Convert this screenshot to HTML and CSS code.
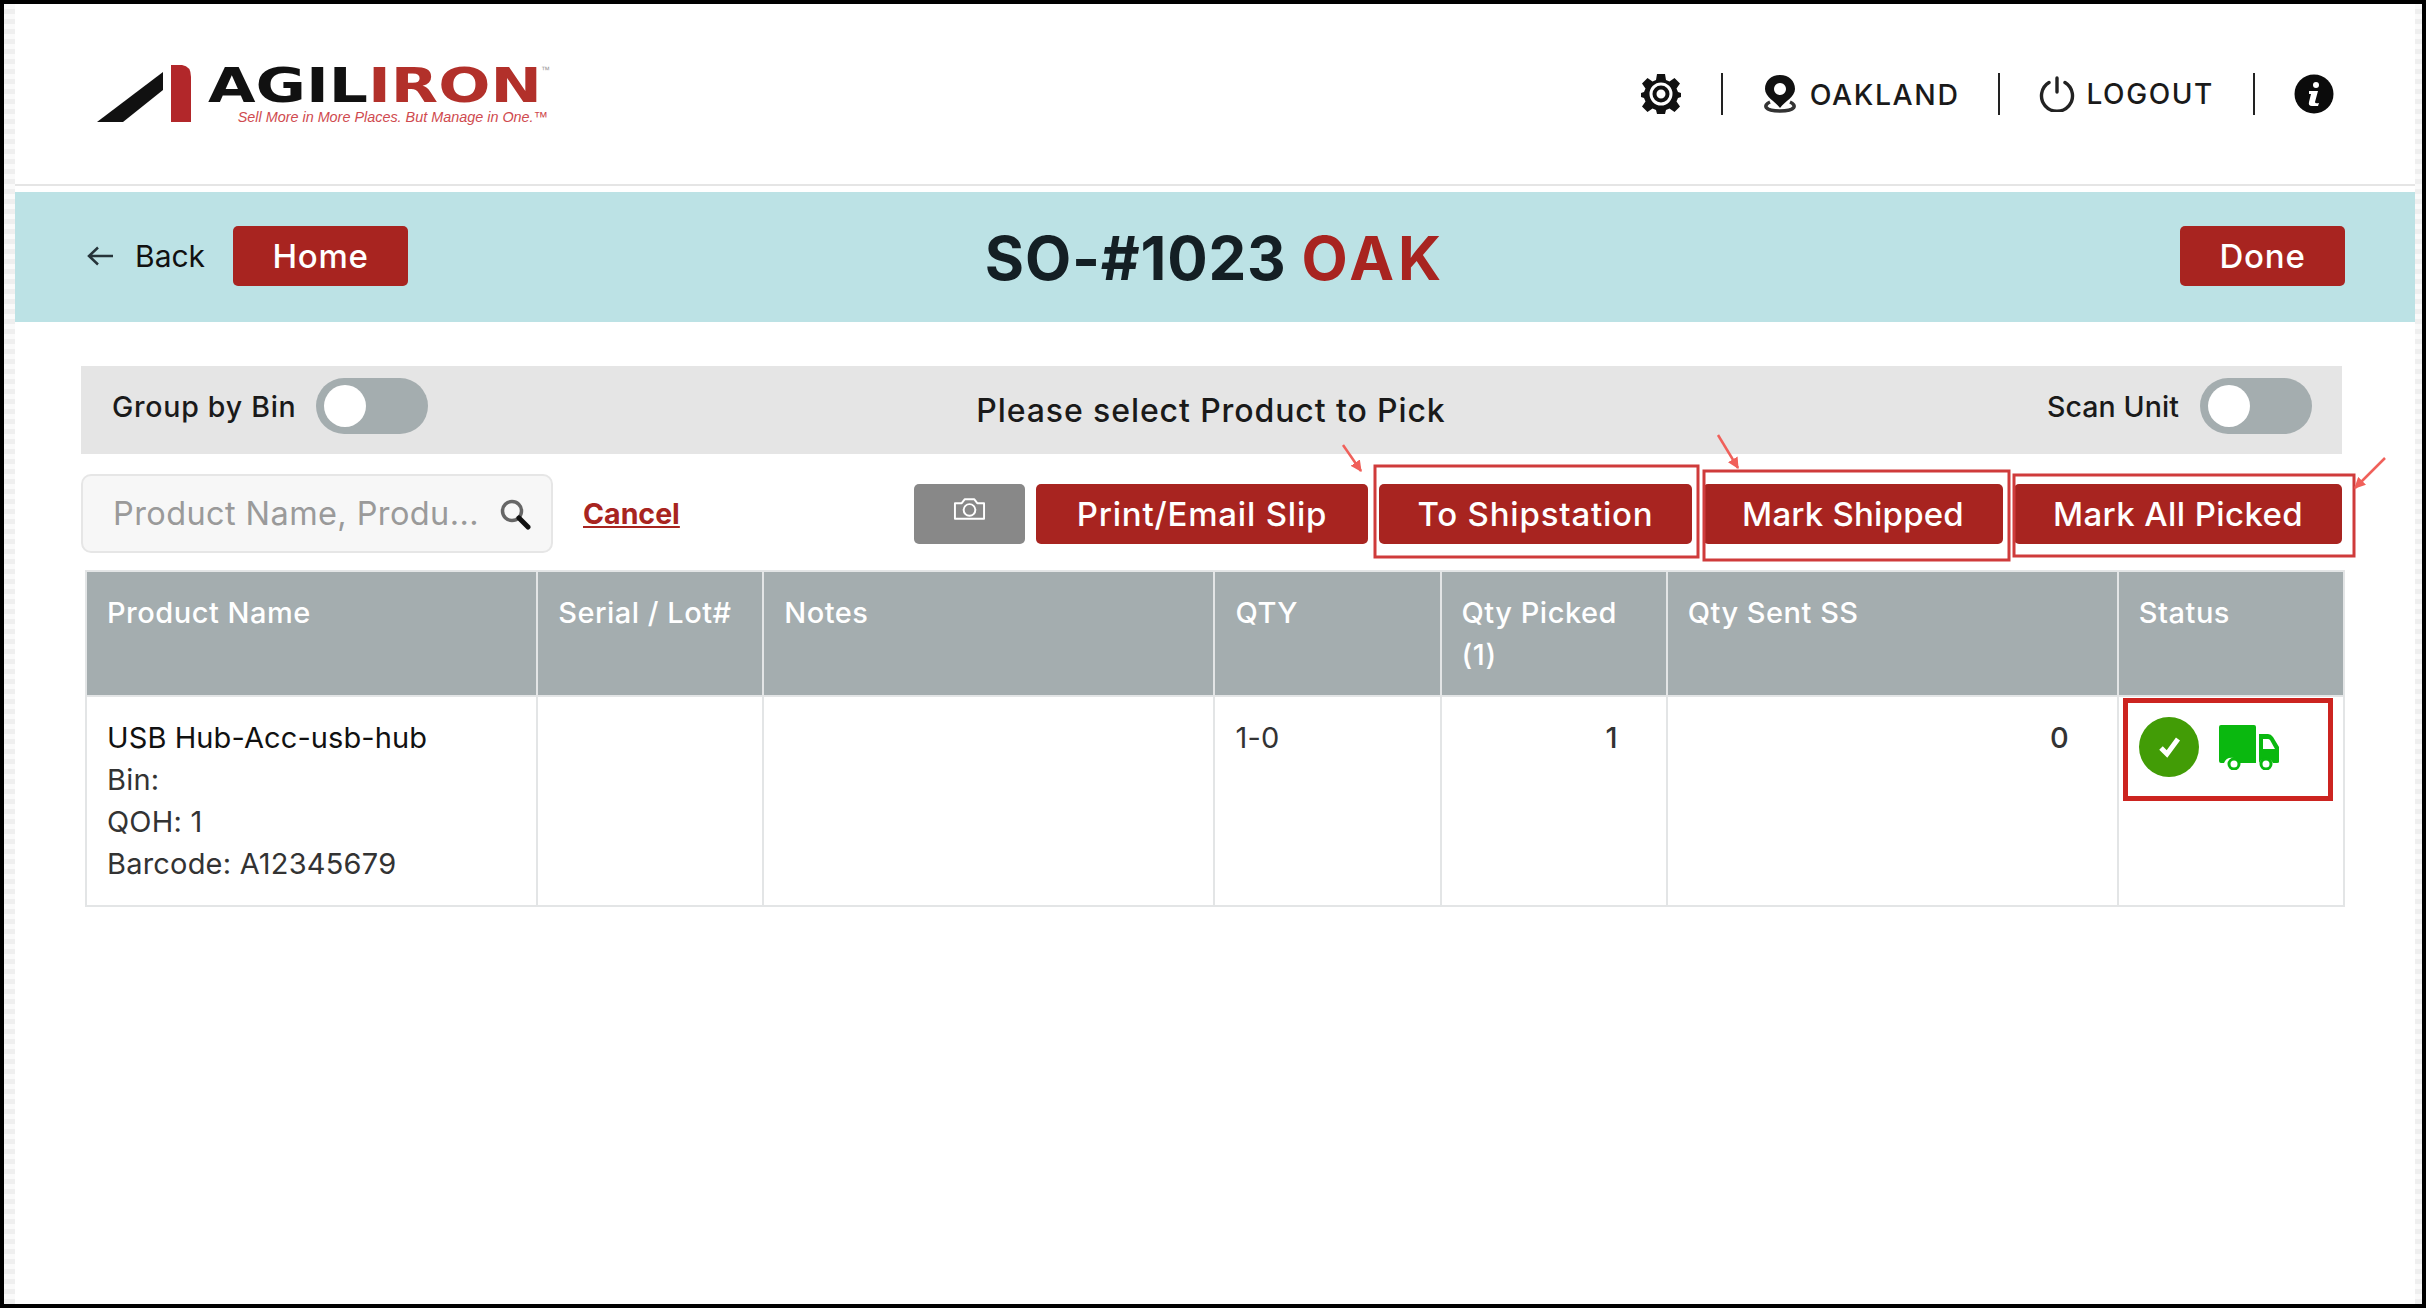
FILE: index.html
```html
<!DOCTYPE html>
<html lang="en">
<head>
<meta charset="utf-8">
<title>SO-#1023 OAK</title>
<link rel="stylesheet" href="styles.css">
</head>
<body>
<div class="frame">
  <header class="topbar">
    <div class="logo">
      <svg class="logo-mark" viewBox="0 0 94 57" aria-hidden="true">
        <path d="M0 57 L66 7 L66 25 L26 57 Z" fill="#111"/>
        <path d="M74 0 H85 Q94 1 94 12 V57 H74 Z" fill="#b2272a"/>
      </svg>
      <div class="logo-words">
        <div class="logo-name"><span class="agil">AGIL</span><span class="iron">IRON</span></div>
        <div class="logo-tag">Sell More in More Places. But Manage in One.™</div>
        <span class="tm">™</span>
      </div>
    </div>
    <nav class="topnav">
      <svg class="ico-gear" viewBox="0 0 40 40" aria-hidden="true">
        <path fill-rule="evenodd" fill="#111" d="M16 0h8l1 6 3.500 1.500 5-3.500 5.500 5.500-3.500 5L37 18l3 1v4l-3 1-1.500 3.500 3.500 5-5.500 5.500-5-3.500L25 36l-1 4h-8l-1-4-3.500-1.500-5 3.500L1 32.500l3.500-5L3 24l-3-1v-4l3-1 1.500-3.500-3.500-5L6.500 4l5 3.500L15 6zM20 8.500a11.500 11.500 0 1 0 0 23a11.500 11.500 0 1 0 0-23z"/>
        <circle cx="20" cy="20" r="6.500" fill="none" stroke="#111" stroke-width="4"/>
      </svg>
      <span class="sep sep-a"></span>
      <svg class="ico-pin" viewBox="0 0 34 38" aria-hidden="true">
        <path fill="none" stroke="#333" stroke-width="3.500" d="M7 27 C0 30 1 36 17 36 C33 36 34 30 27 27"/>
        <path fill-rule="evenodd" fill="#111" d="M17 0 C8 0 2 6 2 14 C2 22 12 26 17 33 C22 26 32 22 32 14 C32 6 26 0 17 0Z M17 8 a6 6 0 1 0 0.010 0Z"/>
      </svg>
      <span class="nav-text nav-oak">OAKLAND</span>
      <span class="sep sep-b"></span>
      <svg class="ico-power" viewBox="0 0 36 36" aria-hidden="true">
        <path fill="none" stroke="#222" stroke-width="3.400" stroke-linecap="round" d="M18 2 V16 M10 6.500 A15.500 15.500 0 1 0 26 6.500"/>
      </svg>
      <span class="nav-text nav-log">LOGOUT</span>
      <span class="sep sep-c"></span>
      <svg class="ico-info" viewBox="0 0 40 40" aria-hidden="true">
        <circle cx="20" cy="20" r="19.500" fill="#0b0b0b"/>
        <circle cx="22" cy="11" r="3" fill="#fff"/>
        <path d="M15 17 H24 L21 28 Q21 30 25 29 L24 32 H18 Q14 32 15 28 L17 20 H15 Z" fill="#fff"/>
      </svg>
    </nav>
  </header>
  <div class="rule"></div>
  <section class="titlebar">
    <div class="title-left">
      <svg class="ico-back" viewBox="0 0 26 20" aria-hidden="true">
        <path fill="none" stroke="#26343a" stroke-width="2.500" d="M26 10 H2 M11 1.500 L2 10 L11 18.500"/>
      </svg>
      <span class="back-text">Back</span>
      <button class="btn btn-home">Home</button>
    </div>
    <h1 class="title">SO-#1023 <span class="title-loc">OAK</span></h1>
    <button class="btn btn-done">Done</button>
  </section>
  <main class="content">
    <div class="toolbar">
      <div class="tool-side tool-side-l">
        <span class="tool-label label-group">Group by Bin</span>
        <span class="toggle"><span class="knob"></span></span>
      </div>
      <div class="tool-msg">Please select Product to Pick</div>
      <div class="tool-side tool-side-r">
        <span class="tool-label label-scan">Scan Unit</span>
        <span class="toggle"><span class="knob"></span></span>
      </div>
    </div>
    <div class="actions">
      <div class="search">
        <span class="placeholder">Product Name, Produ...</span>
        <svg class="ico-search" viewBox="0 0 32 32" aria-hidden="true">
          <circle cx="13" cy="13" r="9.500" fill="none" stroke="#666" stroke-width="3.500"/>
          <path d="M20 20 L29 29" stroke="#111" stroke-width="5" stroke-linecap="round"/>
        </svg>
      </div>
      <a class="cancel" href="#">Cancel</a>
      <div class="action-btns">
        <button class="btn btn-cam" aria-label="Camera">
          <svg class="ico-cam" viewBox="0 0 34 24" aria-hidden="true">
            <path fill="none" stroke="#fff" stroke-width="2" stroke-linejoin="round" d="M2 6 H9 L12 2 H22 L25 6 H32 V22 H2 Z"/>
            <circle cx="17" cy="13" r="6" fill="none" stroke="#fff" stroke-width="2"/>
          </svg>
        </button>
        <button class="btn btn-act btn-print">Print/Email Slip</button>
        <button class="btn btn-act btn-ship">To Shipstation</button>
        <button class="btn btn-act btn-mark">Mark Shipped</button>
        <button class="btn btn-act btn-all">Mark All Picked</button>
      </div>
    </div>
    <table class="grid">
      <colgroup>
        <col class="c-wide"><col class="c-nar"><col class="c-wide"><col class="c-nar"><col class="c-nar"><col class="c-wide"><col class="c-nar">
      </colgroup>
      <thead>
        <tr>
          <th>Product Name</th>
          <th>Serial / Lot#</th>
          <th>Notes</th>
          <th>QTY</th>
          <th>Qty Picked (1)</th>
          <th>Qty Sent SS</th>
          <th>Status</th>
        </tr>
      </thead>
      <tbody>
        <tr>
          <td>
            <div class="prod-name">USB Hub-Acc-usb-hub</div>
            <div>Bin:</div>
            <div>QOH: 1</div>
            <div>Barcode: A12345679</div>
          </td>
          <td></td>
          <td></td>
          <td>1-0</td>
          <td class="num">1</td>
          <td class="num">0</td>
          <td class="status">
            <div class="status-icons">
              <svg class="ico-check" viewBox="0 0 60 60" aria-hidden="true">
                <circle cx="30" cy="30" r="30" fill="#429c06"/>
                <path d="M22 31 L28 37 L39 22" fill="none" stroke="#fff" stroke-width="5"/>
              </svg>
              <svg class="ico-truck" viewBox="0 0 60 45" aria-hidden="true">
                <path fill="#0ab80f" d="M2 0 H35 Q37 0 37 2 V38 H20 A8 8 0 0 0 5 38 H2 Q0 38 0 36 V2 Q0 0 2 0Z"/>
                <path fill="#0ab80f" d="M40 9 H49 Q52 9 54 12 L60 22 V37 Q60 38 58 38 H54 A8 8 0 0 0 40 38 Z"/>
                <path fill="#fff" d="M44 14 H49 Q50 14 51 15 L56 24 H44 Z"/>
                <circle cx="15" cy="39" r="5" fill="#fff" stroke="#0ab80f" stroke-width="3"/>
                <circle cx="47" cy="39" r="5" fill="#fff" stroke="#0ab80f" stroke-width="3"/>
              </svg>
            </div>
          </td>
        </tr>
      </tbody>
    </table>
  </main>
  <svg class="annotations" viewBox="0 0 2426 1308" aria-hidden="true">
    <defs>
      <marker id="head" viewBox="0 0 10 10" refX="9" refY="5" markerWidth="4.500" markerHeight="4.500" orient="auto">
        <path d="M0 0 L10 5 L0 10 Z" fill="#f0605a"/>
      </marker>
    </defs>
    <g class="boxes">
      <rect x="1375" y="466" width="323" height="91"/>
      <rect x="1704" y="471" width="305" height="89"/>
      <rect x="2014" y="475" width="340" height="81"/>
    </g>
    <g class="arrows">
      <line x1="1343" y1="445" x2="1361" y2="471" marker-end="url(#head)"/>
      <line x1="1718" y1="435" x2="1738" y2="468" marker-end="url(#head)"/>
      <line x1="2385" y1="458" x2="2355" y2="488" marker-end="url(#head)"/>
    </g>
    <rect class="status-box" x="2125.500" y="700.500" width="205" height="98"/>
  </svg>
</div>
</body>
</html>
```
FILE: styles.css
```css
* { box-sizing: border-box; }
html, body { margin: 0; padding: 0; }
body { width: 2426px; height: 1308px; background: #000; overflow: hidden; font-family: "Inter", "Liberation Sans", sans-serif; color: #1a1a1a; }

.frame {
  position: relative;
  height: 1300px;
  margin: 4px 0 0 4px;
  width: 2418px;
  padding: 0 7px 0 11px;
  background-color: #fff;
  background-image:
    repeating-linear-gradient(0deg, #efefef 0 5px, #fafafa 5px 10px),
    repeating-linear-gradient(0deg, #efefef 0 5px, #fafafa 5px 10px);
  background-size: 11px 100%, 7px 100%;
  background-position: 0 0, 100% 0;
  background-repeat: no-repeat;
}

.topbar { display: flex; justify-content: space-between; align-items: flex-start; height: 180px; background: #fff; }
.logo { display: flex; align-items: flex-start; margin: 61px 0 0 82px; }
.logo-mark { width: 94px; height: 57px; display: block; }
.logo-words { position: relative; margin: 0 0 0 17px; width: 340px; }
.logo-name { font-family: "DejaVu Sans", sans-serif; font-weight: 700; font-size: 48px; line-height: 40px; height: 44px; white-space: nowrap; transform: scaleX(1.28); transform-origin: left center; }
.agil { color: #111; }
.iron { color: #b2302a; }
.tm { position: absolute; right: -2px; top: 0; color: #999; font-family: "Liberation Sans", sans-serif; font-size: 9px; line-height: 10px; }
.logo-tag { font-family: "Liberation Sans", sans-serif; font-style: italic; font-size: 14.400px; line-height: 16px; color: #cf4a4e; text-align: right; white-space: nowrap; }

.topnav { display: flex; align-items: center; margin: 69px 0 0 0; height: 42px; padding-right: 81px; }
.ico-gear { width: 40px; height: 40px; }
.sep { width: 2px; height: 42px; background: #222; display: block; }
.sep-a { margin: 0 40px; }
.ico-pin { width: 34px; height: 38px; margin-right: 13px; }
.nav-text { font-size: 28px; font-weight: 500; letter-spacing: 1.600px; color: #1a1a1a; white-space: nowrap; }
.nav-oak { font-size: 28.400px; }
.sep-b { margin: 0 39px 0 39px; }
.ico-power { width: 36px; height: 36px; margin-right: 11px; }
.sep-c { margin: 0 39px 0 39px; }
.ico-info { width: 40px; height: 40px; }

.rule { height: 2px; background: #e5e5e5; }
.titlebar { display: flex; align-items: center; justify-content: space-between; height: 130px; margin-top: 6px; background: #bce2e5; padding: 0 70px 2px 72px; position: relative; }
.title-left { display: flex; align-items: center; }
.ico-back { width: 26px; height: 20px; margin-right: 22px; }
.back-text { font-size: 30px; font-weight: 400; color: #111; margin-right: 28px; }
.btn { border: 0; border-radius: 5px; background: #a82420; color: #fff; font-family: inherit; font-size: 33px; font-weight: 500; letter-spacing: .8px; height: 60px; padding: 0; display: block; }
.btn-home { width: 175px; }
.btn-done { width: 165px; }
.title { margin: 3px 0 0; font-size: 60px; font-weight: 700; letter-spacing: .8px; color: #141f24; line-height: 70px; flex: 1; text-align: center; padding-right: 158px; }
.title-loc { color: #a82420; letter-spacing: 4px; }

.content { padding: 44px 0 0 66px; }
.toolbar { display: grid; grid-template-columns: 1fr auto 1fr; align-items: center; width: 2261px; height: 88px; background: #e5e5e5; padding: 0 30px 0 31px; }
.tool-side { display: flex; align-items: center; gap: 21px; margin-top: -8px; }
.tool-side-l { gap: 20px; }
.tool-side-r { justify-content: flex-end; }
.tool-label { font-size: 28.500px; font-weight: 500; color: #1a1a1a; }
.label-group { letter-spacing: .75px; }
.label-scan { letter-spacing: .1px; }
.tool-msg { font-size: 32px; font-weight: 500; letter-spacing: .9px; color: #1a1a1a; padding-top: 1px; padding-right: 2px; }
.toggle { display: flex; align-items: center; width: 112px; height: 56px; border-radius: 28px; background: #a4adaf; padding-left: 8px; }
.knob { width: 42px; height: 42px; border-radius: 50%; background: #fff; display: block; }

.actions { display: flex; align-items: center; width: 2261px; margin-top: 20px; height: 79px; }
.search { display: flex; align-items: center; justify-content: space-between; width: 472px; height: 79px; background: #f7f7f7; border: 2px solid #e6e6e6; border-radius: 10px; padding: 0 20px 0 30px; }
.placeholder { font-size: 32.500px; letter-spacing: .4px; color: #9a9a9a; white-space: nowrap; }
.ico-search { width: 32px; height: 32px; }
.cancel { font-size: 28.500px; font-weight: 700; color: #a82420; margin-left: 30px; }
.action-btns { display: flex; align-items: center; gap: 11px; margin-left: auto; }
.btn-cam { width: 111px; background: #888; display: flex; align-items: center; justify-content: center; padding-bottom: 10px; }
.ico-cam { width: 33px; height: 24px; }
.btn-print { width: 332px; }
.btn-ship { width: 313px; }
.btn-mark { width: 300px; letter-spacing: .2px; }
.btn-all { width: 328px; letter-spacing: .4px; }

.grid { border-collapse: collapse; table-layout: fixed; width: 2260px; margin: 17px 0 0 4px; font-size: 29px; letter-spacing: .2px; }
.c-wide { width: 451px; }
.c-nar { width: 226px; }
.grid th { background: #a4adaf; color: #fff; border: 2px solid #e3e5e6; font-weight: 500; font-size: 29px; letter-spacing: .5px; line-height: 42px; text-align: left; vertical-align: top; padding: 20px 20px 19px; height: 124px; }
.grid td { border: 2px solid #e3e5e6; background: #fff; vertical-align: top; padding: 20px 20px 20px; line-height: 42px; color: #333; font-weight: 400; height: 209px; }
.prod-name { font-weight: 400; color: #111; letter-spacing: .1px; }
.grid td.num { text-align: right; padding-right: 48px; font-weight: 500; }
.grid td.status { padding: 20px 0 0 20px; }
.status-icons { display: flex; align-items: center; gap: 20px; }
.ico-check { width: 60px; height: 60px; display: block; }
.ico-truck { width: 60px; height: 45px; display: block; }

.annotations { position: absolute; left: -4px; top: -4px; width: 2426px; height: 1308px; pointer-events: none; }
.boxes rect { fill: none; stroke: #cf3b3b; stroke-width: 3; }
.arrows line { stroke: #f0605a; stroke-width: 2.500; }
.status-box { fill: none; stroke: #cc2420; stroke-width: 5; }
```
